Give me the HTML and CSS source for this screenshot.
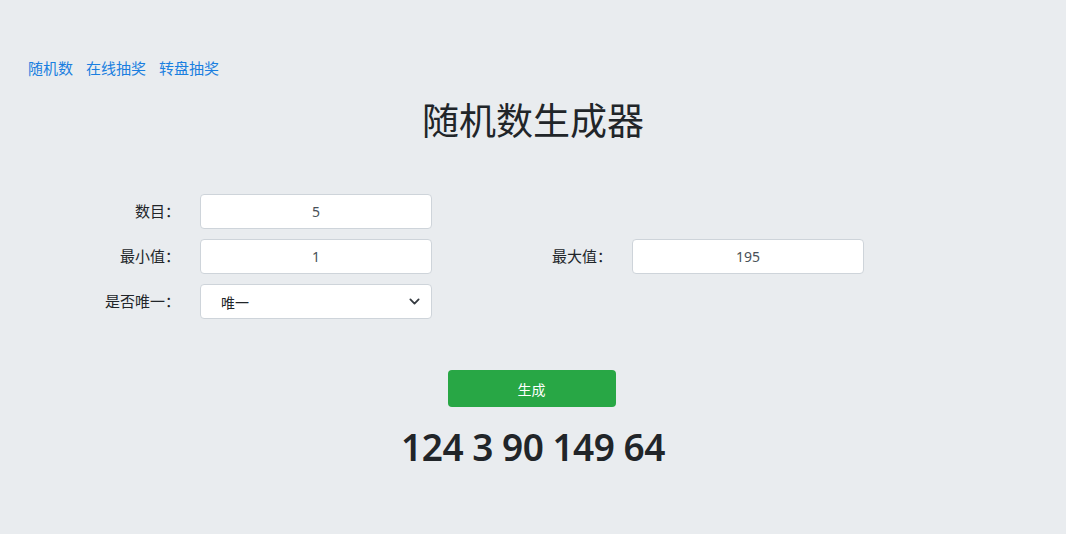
FILE: index.html
```html
<!DOCTYPE html>
<html lang="zh">
<head>
<meta charset="utf-8">
<title>随机数生成器</title>
<link rel="stylesheet" href="styles.css">
</head>
<body>
<div class="page">
  <nav class="nav">
    <a href="#">随机数</a>
    <a href="#">在线抽奖</a>
    <a href="#">转盘抽奖</a>
  </nav>
  <h1 class="title">随机数生成器</h1>
  <form class="form">
    <label class="label">数目：</label>
    <input class="field" type="text" value="5">
    <span></span><span></span>
    <label class="label">最小值：</label>
    <input class="field" type="text" value="1">
    <label class="label">最大值：</label>
    <input class="field" type="text" value="195">
    <label class="label">是否唯一：</label>
    <div class="select">
      <span>唯一</span>
      <svg class="chev" width="11" height="11" viewBox="0 0 16 16"><path d="M2 5l6 6 6-6" fill="none" stroke="#343a40" stroke-width="2.6" stroke-linecap="round" stroke-linejoin="round"/></svg>
    </div>
  </form>
  <div class="actions">
    <button class="btn" type="button">生成</button>
  </div>
  <div class="result">124 3 90 149 64</div>
</div>
</body>
</html>
```
FILE: styles.css
```css
html, body {
  margin: 0;
  padding: 0;
  background: #e9ecef;
}
body {
  font-family: "Noto Sans", "Noto Sans CJK SC", sans-serif;
  color: #212529;
}
.page {
  padding-top: 57px;
}
.nav {
  display: flex;
  gap: 13px;
  padding-left: 28px;
  font-size: 15px;
  line-height: 22px;
}
.nav a {
  color: #1a7fe0;
  text-decoration: none;
}
.title {
  margin: 16px 0 0;
  text-align: center;
  font-size: 37px;
  font-weight: 400;
  line-height: 52px;
}
.form {
  display: grid;
  grid-template-columns: 164px 232px 152px 232px;
  column-gap: 24px;
  row-gap: 10px;
  padding-left: 12px;
  margin-top: 47px;
}
.label {
  text-align: right;
  font-size: 15px;
  line-height: 35px;
  color: #212529;
  margin-right: -4px;
}
.field {
  box-sizing: border-box;
  height: 35px;
  width: 232px;
  border: 1px solid #ced4da;
  border-radius: 4px;
  background: #fff;
  text-align: center;
  font-family: "Noto Sans", "Noto Sans CJK SC", sans-serif;
  font-size: 14px;
  color: #495057;
  padding: 0 12px;
  margin: 0;
}
.select {
  box-sizing: border-box;
  height: 35px;
  border: 1px solid #ced4da;
  border-radius: 4px;
  background: #fff;
  display: flex;
  align-items: center;
  justify-content: space-between;
  padding: 0 11px 0 20px;
  font-size: 14px;
  color: #212529;
}
.actions {
  display: flex;
  justify-content: center;
  margin-top: 51px;
  padding-right: 3px;
}
.btn {
  width: 168px;
  height: 37px;
  border: none;
  border-radius: 4px;
  background: #28a745;
  color: #fff;
  font-family: "Noto Sans", "Noto Sans CJK SC", sans-serif;
  font-size: 14px;
  font-weight: 400;
}
.result {
  text-align: center;
  font-size: 37px;
  font-weight: 600;
  letter-spacing: -0.5px;
  line-height: 54px;
  margin-top: 13px;
  color: #212529;
}
```
